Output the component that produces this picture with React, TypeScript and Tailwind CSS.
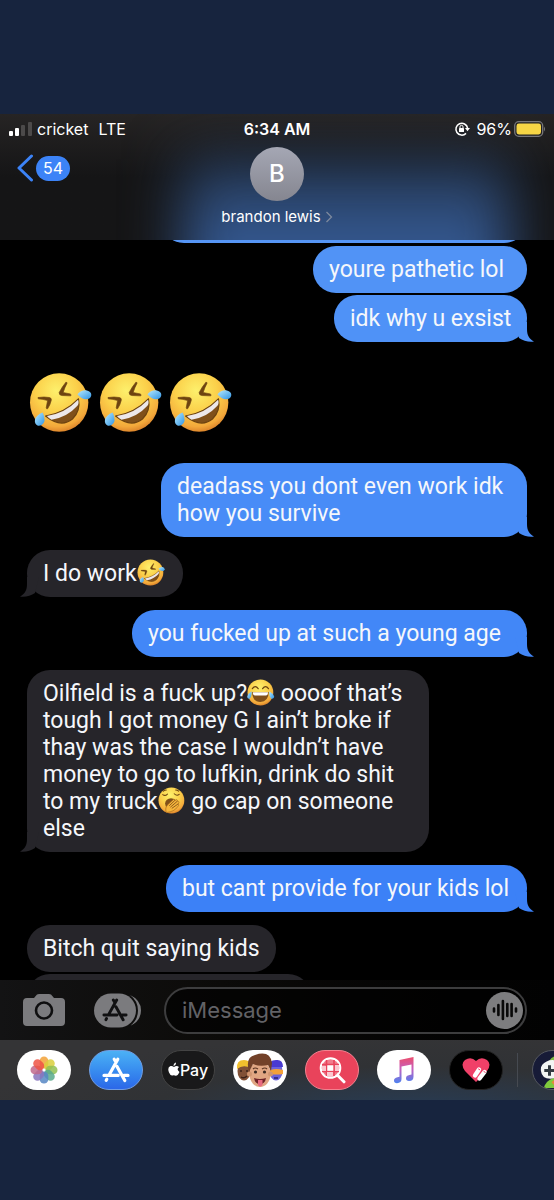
import React from 'react';

type EmojiKind = 'rofl' | 'joy' | 'yawn';

interface Message {
  from: 'me' | 'them';
  body: React.ReactNode;
  width: string;
  color?: string;
  tail?: boolean;
  spacing: string;
}

const Emoji: React.FC<{ kind: EmojiKind; className?: string }> = ({ kind, className }) => (
  <svg viewBox="28 20 190 184" className={className} role="img" aria-label={kind}>
    <defs>
      <radialGradient id="face" cx="0.45" cy="0.3" r="0.72">
        <stop offset="0" stopColor="#fdf06c" />
        <stop offset="0.5" stopColor="#fbd04a" />
        <stop offset="0.85" stopColor="#f3a93b" />
        <stop offset="1" stopColor="#d97f28" />
      </radialGradient>
      <linearGradient id="tear" x1="0" y1="0" x2="1" y2="1">
        <stop offset="0" stopColor="#b9ebff" />
        <stop offset="1" stopColor="#2f94e4" />
      </linearGradient>
    </defs>
    <circle cx="119" cy="112" r="88" fill="url(#face)" />
    {kind === 'rofl' && (
      <>
        <path d="M140 50Q128 64 119 82Q118 90 128 91L154 92Q157 88 152 86L131 82Q136 66 143 53Z" fill="#6d4310" stroke="#6d4310" strokeWidth="2" strokeLinejoin="round" />
        <path d="M55 97Q74 94 90 97Q97 99 95 106Q92 119 84 131Q80 132 80 128L84 106Q70 102 56 101Z" fill="#6d4310" stroke="#6d4310" strokeWidth="2" strokeLinejoin="round" />
        <path d="M78 153Q137 143 177 101Q184 137 159 162Q124 190 78 153Z" fill="#80501a" stroke="#6d4310" strokeWidth="4" strokeLinejoin="round" />
        <path d="M82 153Q137 145 176 104Q180 115 174 122Q143 157 96 164Q87 160 82 153Z" fill="#ece7ea" />
        <path d="M174 87Q185 74 200 75Q216 78 216 89Q214 102 200 102Q186 102 174 87Z" fill="url(#tear)" />
        <path d="M69 142Q77 158 74 170Q68 183 55 182Q44 177 46 163Q51 149 69 142Z" fill="url(#tear)" />
      </>
    )}
    {kind === 'joy' && (
      <>
        <path d="M64 86Q84 58 104 86M134 86Q154 58 174 86" fill="none" stroke="#6d4310" strokeWidth="8" strokeLinecap="round" />
        <path d="M62 108H176Q174 174 119 176Q64 174 62 108Z" fill="#80501a" />
        <path d="M67 110H171Q170 132 156 132H82Q68 132 67 110Z" fill="#fff" />
        <path d="M59 104Q60 144 45 154Q29 158 29 140Q33 120 59 104Z" fill="url(#tear)" />
        <path d="M179 104Q178 144 193 154Q213 158 213 140Q207 120 179 104Z" fill="url(#tear)" />
      </>
    )}
    {kind === 'yawn' && (
      <>
        <path d="M60 72Q76 84 92 68M138 66Q156 84 172 70M64 48Q72 40 84 40M148 40Q160 40 168 48" fill="none" stroke="#6d4310" strokeWidth="7" strokeLinecap="round" />
        <ellipse cx="116" cy="132" rx="40" ry="36" fill="#80501a" />
        <path d="M84 194Q74 160 92 142L134 104Q144 102 142 112L154 106Q164 108 158 118L168 118Q174 124 166 134L168 140Q170 148 160 156Q140 188 84 194Z" fill="#f5b53b" stroke="#9a5d18" strokeWidth="4" />
        <path d="M106 146L140 114M114 156L156 120M124 164L164 136" stroke="#80501a" strokeWidth="6" strokeLinecap="round" />
      </>
    )}
  </svg>
);

const InlineEmoji: React.FC<{ kind: EmojiKind }> = ({ kind }) => (
  <Emoji kind={kind} className="-mt-1 inline h-[27px] w-7 align-middle" />
);

const messages: Message[] = [
  { from: 'me', body: 'youre pathetic lol', width: 'w-[214px]', color: 'bg-[#5193f6] text-[#5193f6]', spacing: 'mt-[3px]' },
  { from: 'me', body: 'idk why u exsist', width: 'w-[193px]', color: 'bg-[#4f92f7] text-[#4f92f7]', tail: true, spacing: 'mt-[2px]' },
  { from: 'me', body: <>deadass you dont even work idk<br />how you survive</>, width: 'w-[366px]', color: 'bg-[#488cf7] text-[#488cf7]', tail: true, spacing: '' },
  { from: 'them', body: <>I do work<InlineEmoji kind="rofl" /></>, width: 'w-[156px]', tail: true, spacing: 'mt-[13px]' },
  { from: 'me', body: 'you fucked up at such a young age', width: 'w-[395px]', color: 'bg-[#4287f7] text-[#4287f7]', tail: true, spacing: 'mt-[13px]' },
  {
    from: 'them',
    body: (
      <>
        Oilfield is a fuck up?<InlineEmoji kind="joy" /> oooof that’s<br />
        tough I got money G I ain’t broke if<br />
        thay was the case I wouldn’t have<br />
        money to go to lufkin, drink do shit<br />
        to my truck<InlineEmoji kind="yawn" /> go cap on someone<br />
        else
      </>
    ),
    width: 'w-[402px]',
    tail: true,
    spacing: 'mt-[13px]'
  },
  { from: 'me', body: 'but cant provide for your kids lol', width: 'w-[361px]', color: 'bg-[#3c81f7] text-[#3c81f7]', tail: true, spacing: 'mt-[13px]' },
  { from: 'them', body: 'Bitch quit saying kids', width: 'w-[249px]', spacing: 'mt-[13px]' }
];

const Bubble: React.FC<{ message: Message }> = ({ message }) => {
  const mine = message.from === 'me';
  return (
    <div
      className={`relative rounded-[23px] py-[10px] pl-4 ${message.width} ${message.spacing} ${
        mine ? `self-end ${message.color}` : 'self-start bg-[#26252a] text-[#26252a]'
      }`}
    >
      {message.tail && (
        <svg
          viewBox="0 0 24 20"
          className={`absolute bottom-0 h-5 w-6 ${mine ? '-right-2' : '-left-2 -scale-x-100'}`}
          aria-hidden="true"
        >
          <path d="M4 0H16V7C16 13 18 17 23 19.500C18 20.500 12 18.500 8 16Z" fill="currentColor" />
        </svg>
      )}
      <p className="relative whitespace-nowrap font-['Roboto',sans-serif] text-[23px] leading-[27px] text-[#f5f7fb]">{message.body}</p>
    </div>
  );
};

const StatusBar = () => (
  <div className="relative grid h-[30px] grid-cols-3 items-center text-base text-white">
    <div className="flex items-center pl-[9px]">
      <svg viewBox="0 0 24 16" className="h-4 w-6">
        <rect x="0" y="10" width="4" height="5" rx="1" fill="#fff" />
        <rect x="6" y="7" width="4" height="8" rx="1" fill="#fff" />
        <rect x="12" y="4" width="4" height="11" rx="1" fill="#4c4a4a" />
        <rect x="19" y="1" width="4" height="14" rx="1" fill="#4c4a4a" />
      </svg>
      <span className="ml-1">cricket</span>
      <span className="ml-[10px]">LTE</span>
    </div>
    <span className="text-center font-semibold">6:34 AM</span>
    <div className="flex items-center justify-end pr-2">
      <svg viewBox="0 0 16 16" className="mr-1.5 h-4 w-4" fill="none" stroke="#fff" strokeWidth="1.5">
        <path d="M12 12.4A5.9 5.9 0 1 1 13.6 7" />
        <path d="M11 7H16L13.500 10.3Z" fill="#fff" stroke="none" />
        <rect x="5" y="7" width="5" height="4" rx="0.6" fill="#fff" stroke="none" />
        <path d="M6 7V5.8a1.5 1.5 0 0 1 3 0V7" strokeWidth="1" />
      </svg>
      <span>96%</span>
      <svg viewBox="0 0 32 16" className="ml-0.5 h-4 w-8">
        <rect x="0.7" y="0.7" width="28" height="14.6" rx="4" fill="none" stroke="#77777b" strokeWidth="1.3" />
        <rect x="2.5" y="2.5" width="24.5" height="11" rx="2.4" fill="#f6d545" />
        <path d="M30 5.5Q32 8 30 10.5Z" fill="#77777b" />
      </svg>
    </div>
  </div>
);

const Header = () => (
  <header className="relative h-[126px] overflow-hidden bg-linear-to-b from-[#262424] to-[#151516] to-50%">
    <div className="absolute -bottom-16 left-[33%] right-[8%] h-[145px] bg-linear-to-b from-[#243753] to-[#355a94] to-60% blur-[28px]" />
    <StatusBar />
    <button className="absolute left-4 top-[40px] flex items-center" aria-label="Back">
      <svg viewBox="0 0 18 28" className="h-7 w-[18px]">
        <path d="M15.5 2L3 14L15.5 26" fill="none" stroke="#3c83f7" strokeWidth="3" strokeLinecap="round" strokeLinejoin="round" />
      </svg>
      <span className="ml-0.5 flex h-[25px] w-[34px] items-center justify-center rounded-full bg-[#3c83f7] text-base text-white">54</span>
    </button>
    <button className="relative mx-auto mt-[3px] flex flex-col items-center text-white">
      <span className="flex h-[54px] w-[54px] items-center justify-center rounded-full bg-linear-to-b from-[#a5a7b4] to-[#858690] text-2xl font-medium">B</span>
      <span className="mt-[6px] flex items-center text-[15px] leading-5">
        brandon lewis
        <svg viewBox="0 0 8 12" className="ml-1 h-3 w-2">
          <path d="M1.5 1L6.5 6L1.5 11" fill="none" stroke="#7d899d" strokeWidth="1.3" />
        </svg>
      </span>
    </button>
  </header>
);

// The three crossed strokes of the App Store mark, in a 28x26 box
const StoreMark: React.FC<{ className?: string }> = ({ className }) => (
  <svg viewBox="0 0 28 26" className={className} fill="none" stroke="currentColor" strokeWidth="3.2" strokeLinecap="round">
    <path d="M15.8 2.2L7.5 17.2M12.2 2.2L14 5.2M15 9.4L22.8 23.6M4.8 22.2L4.2 23.4M2 18.4H16.2M21.8 18.4H26" />
  </svg>
);

const Composer = () => (
  <div className="flex h-[60px] items-center bg-linear-to-r from-[#131314] via-[#0c0b09] via-40% to-[#020202] pl-[23px] pr-[27px]">
    <button aria-label="Camera">
      <svg viewBox="0 0 42 34" className="h-[34px] w-[42px]">
        <path d="M4 5H11L14 1.5Q15 1 16 1H26Q27 1 28 1.5L31 5H38Q42 5 42 9V29Q42 33 38 33H4Q0 33 0 29V9Q0 5 4 5Z" fill="#7b7b7e" />
        <circle cx="21" cy="17.5" r="8" fill="none" stroke="#0e0e0f" strokeWidth="2.6" />
      </svg>
    </button>
    <button className="relative ml-[29px] h-[35px] w-[47px] text-[#111112]" aria-label="Apps">
      <svg viewBox="0 0 47 35" className="h-full w-full">
        <path d="M17 0.5H25A17 17 0 0 1 25 34.5H17A17 17 0 0 1 17 0.5Z" fill="#7b7b7e" />
        <path d="M36 2Q47 7 47 17.5T36 33Q44 27 44 17.5T36 2Z" fill="#7b7b7e" />
      </svg>
      <StoreMark className="absolute left-2 top-[5px] h-6 w-[26px]" />
    </button>
    <div className="relative ml-[23px] flex-1">
      <input
        type="text"
        aria-label="iMessage"
        placeholder="iMessage"
        className="h-[47px] w-full rounded-full border-2 border-[#3d3d3e] bg-black/60 pl-4 text-[22px] text-white placeholder:text-[#626266]"
      />
      <button className="absolute right-1 top-[5px] flex h-[37px] w-[37px] items-center justify-center rounded-full bg-[#7d7d7f]" aria-label="Record audio">
        <svg viewBox="0 0 26 22" className="h-[22px] w-[26px]" stroke="#080808" strokeWidth="2.6" strokeLinecap="round">
          <path d="M2 9.5V12.5M6.4 6V16M10.9 2V20M15.3 5V17M19.6 5V17M24 9.5V12.5" />
        </svg>
      </button>
    </div>
  </div>
);

const petals = ['#f2a238', '#d9cf3c', '#91bf52', '#58a98c', '#5687c4', '#8874bd', '#c1698c', '#ee5444'];

const PhotosIcon = () => (
  <svg viewBox="-15 -15 30 30" className="h-[30px] w-[30px]">
    {petals.map((color, i) => (
      <rect key={color} x="-4.3" y="-13.5" width="8.6" height="12" rx="4.3" fill={color} opacity="0.85" transform={`rotate(${i * 45})`} />
    ))}
  </svg>
);

const PayIcon = () => (
  <span className="flex items-center text-base font-medium text-white">
    <svg viewBox="0 0 24 28" className="mb-0.5 h-[14px] w-3" fill="#fff">
      <path d="M16 1Q16 7 11 8Q11 2 16 1ZM12 10Q17 6 22 10Q16 15 23 20Q18 30 14 27Q11 26 9 27Q5 28 2 21Q-2 11 5 8Q8 7 12 10Z" />
    </svg>
    Pay
  </span>
);

const MemojiIcon = () => (
  <svg viewBox="0 0 54 40" className="h-full w-full">
    <ellipse cx="11" cy="21" rx="6.500" ry="9.500" fill="#805036" />
    <path d="M4 19Q3 10 11 10Q18 10 18 18Q10 14 4 19Z" fill="#f1bf2e" />
    <path d="M7 21h2M13 21h2M8 27Q11 29 14 26" stroke="#392018" strokeWidth="1.5" fill="none" />
    <ellipse cx="43" cy="21" rx="6.500" ry="9.500" fill="#6b62dc" />
    <path d="M37 17Q35 10 43 10Q50 9 50 17Z" fill="#493ad0" />
    <path d="M37 20Q44 18 50 20V24Q44 25 37 24Z" fill="#f4a13a" />
    <path d="M41 28h4" stroke="#2a236f" strokeWidth="1.5" />
    <ellipse cx="27" cy="24" rx="10.5" ry="13" fill="#e0a683" />
    <circle cx="16.5" cy="24" r="2.5" fill="#d09570" />
    <circle cx="37.5" cy="24" r="2.5" fill="#d09570" />
    <path d="M16 22Q12 7 22 5Q37 0 39 13L38 21L35 15Q27 17 20 14Z" fill="#724129" />
    <path d="M20 19Q22 17 25 19M29 19Q32 17 34 19" stroke="#5c3524" strokeWidth="1.2" fill="none" />
    <circle cx="22.5" cy="22" r="1.6" fill="#3a2923" />
    <circle cx="31.5" cy="22" r="1.6" fill="#3a2923" />
    <path d="M21 28Q27 30 33 28Q32 34 27 34T21 28Z" fill="#6d2328" />
    <path d="M25 30H29.5V35Q27 38 25 35Z" fill="#e86a80" />
  </svg>
);

const ImagesIcon = () => (
  <svg viewBox="0 0 28 28" className="h-7 w-7" fill="none" stroke="#fff">
    <circle cx="12.5" cy="12" r="9.8" fill="#f17d8d" strokeWidth="2" />
    <path d="M8.5 4V20M16 4V20M4 8.5H21M4 15.5H21" stroke="#e9435b" strokeWidth="1.6" />
    <rect x="9.3" y="9.3" width="6" height="5.5" fill="#fff" stroke="none" />
    <path d="M4 10H8V15H4ZM17 9H21V15H17ZM9 16H15V21H9Z" fill="#fbc6ce" stroke="none" />
    <path d="M19.8 19.5L26 25.8" strokeWidth="3" strokeLinecap="round" />
  </svg>
);

const MusicIcon = () => (
  <svg viewBox="0 0 24 28" className="h-7 w-6">
    <defs>
      <linearGradient id="note" x1="0" y1="0" x2="0" y2="1">
        <stop offset="0" stopColor="#ec4d6c" />
        <stop offset="0.45" stopColor="#c75fbd" />
        <stop offset="1" stopColor="#4b82f0" />
      </linearGradient>
    </defs>
    <path d="M7.5 4L21.5 1V20.5Q21.5 25 17 25Q14 25 14 22.3Q14 19.5 17.5 19L19.5 18.5V8.5L9.5 10.5V23Q9.5 27 5 27.2Q2 27 2 24.4Q2 22 5.5 21.3L7.5 20.8Z" fill="url(#note)" />
  </svg>
);

const HeartIcon = () => (
  <svg viewBox="0 0 28 26" className="h-[26px] w-7">
    <path d="M14 25L3 14Q-2 7 3 3Q9-1 14 4Q19-1 25 3Q30 7 25 14Z" fill="#f04068" />
    <path d="M13 18.500L17 12.500M17.500 21.500L22.500 15" stroke="#fff" strokeWidth="4.4" strokeLinecap="round" />
    <path d="M16.200 11.800L18.200 13M21.600 14.300L23.600 15.600" stroke="#f04068" strokeWidth="1" />
  </svg>
);

const GameIcon = () => (
  <svg viewBox="0 0 54 40" className="h-full w-full">
    <path d="M11 39Q13 31 22 28L37 30V39Z" fill="#7fc93d" />
    <path d="M17 10Q22 2 34 7V20H20Z" fill="#82bd45" />
    <path d="M19 33L27 26L34 38H24Z" fill="#e58b35" />
    <path d="M14 11Q20 8 26 11Q36 9 42 17L34 30Q25 27 20 29Q9 30 8 21Q7 14 14 11Z" fill="#f3f5f3" />
    <path d="M17 15V26M11.500 20.500H22.500" stroke="#333a41" strokeWidth="3.2" />
  </svg>
);

const apps = [
  { name: 'Photos', style: 'bg-white', icon: <PhotosIcon /> },
  { name: 'App Store', style: 'border border-[#6f9de3] bg-linear-to-b from-[#4cb1f5] to-[#2c67e8] text-white', icon: <StoreMark className="h-[26px] w-7" /> },
  { name: 'Apple Pay', style: 'border border-[#444] bg-[#19191a]', icon: <PayIcon /> },
  { name: 'Memoji', style: 'bg-white', icon: <MemojiIcon /> },
  { name: 'Images', style: 'border border-[#f3818f] bg-[#e9435b]', icon: <ImagesIcon /> },
  { name: 'Music', style: 'bg-white', icon: <MusicIcon /> },
  { name: 'Digital Touch', style: 'border border-[#222] bg-black', icon: <HeartIcon /> }
];

const AppDrawer = () => (
  <nav className="flex h-[60px] items-center gap-[18px] overflow-hidden bg-[radial-gradient(ellipse_at_75%_120%,#273c56_0%,#303235_45%,#343436_75%)] pl-[17px]">
    {apps.map((app) => (
      <button key={app.name} aria-label={app.name} className={`flex h-10 w-[54px] shrink-0 items-center justify-center overflow-hidden rounded-[20px] ${app.style}`}>
        {app.icon}
      </button>
    ))}
    <div className="-mx-1 h-[34px] w-px shrink-0 bg-[#464a51]" />
    <button aria-label="Games" className="h-10 w-[54px] shrink-0 overflow-hidden rounded-[20px] border border-[#55585f] bg-[#171b37]">
      <GameIcon />
    </button>
  </nav>
);

export default function App() {
  return (
    <div className="min-h-screen bg-[#17243e] pb-[100px] pt-[114px] font-['Inter',sans-serif]">
      <Header />
      <main className="flex flex-col overflow-hidden bg-black px-[27px]">
        {/* Bubble that is scrolled up under the header */}
        <div className="-mt-11 h-[47px] w-[366px] self-end rounded-[23px] bg-[#5696f6]" />
        {messages.slice(0, 2).map((message, i) => (
          <Bubble key={i} message={message} />
        ))}
        <div className="-mx-px my-[30px] flex gap-[7px] pl-[3px]">
          {[0, 1, 2].map((i) => (
            <Emoji key={i} kind="rofl" className="h-[61px] w-[63px]" />
          ))}
        </div>
        {messages.slice(2).map((message, i) => (
          <Bubble key={i} message={message} />
        ))}
        <div className="-mb-[41px] mt-[2px] h-[47px] w-[284px] self-start rounded-[23px] bg-[#26252a]" />
      </main>
      <Composer />
      <AppDrawer />
    </div>
  );
}
